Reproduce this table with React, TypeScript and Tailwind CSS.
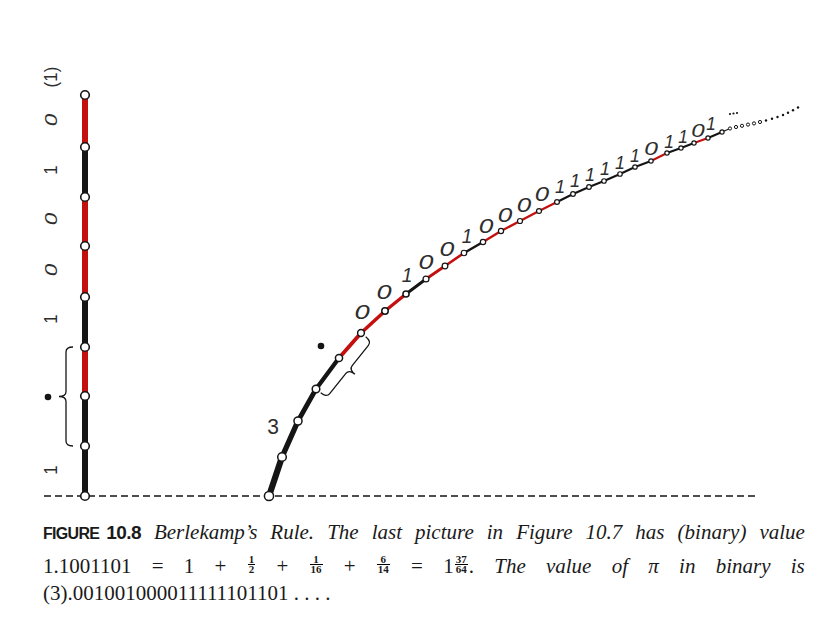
import React from "react";

const RED = "#c40f0f";
const INK = "#151515";

const C: [number, number][] = [
  [269, 496], [282, 457], [298, 421], [316, 389], [339, 358], [361, 333],
  [385, 311], [406, 294], [426, 279], [445, 266], [464, 253], [483, 242],
  [501, 231], [520, 221], [539, 211], [557, 202], [573, 194], [589, 187],
  [604, 181], [620, 174], [635, 167], [651, 161], [667, 153], [681, 148],
  [694, 143], [708, 138], [722, 132],
];

const DIGITS = "001001000011111101101";

const LABELS: [number, number][] = [
  [362, 312], [384, 292], [407, 275], [426, 262], [447, 249], [467, 236],
  [486, 226], [505, 215], [524, 205], [542, 194], [560, 186], [575, 180],
  [590, 174], [605, 168], [620, 162], [635, 156], [651, 149], [669, 142],
  [683, 137], [698, 131], [711, 124],
];

const LEFT_Y = [95, 147, 197, 246, 297, 347, 396, 446, 496];
const LEFT_COL = [RED, INK, RED, RED, INK, RED, INK, INK];

function segColor(i: number) {
  if (i < 4) return INK;
  if (i === 4) return RED;
  return DIGITS[i - 5] === "0" ? RED : INK;
}

function brace(
  ax: number, ay: number, bx: number, by: number,
  nx: number, ny: number, w: number, k: number
) {
  const len = Math.hypot(bx - ax, by - ay);
  const tx = (bx - ax) / len;
  const ty = (by - ay) / len;
  const mx = (ax + bx) / 2;
  const my = (ay + by) / 2;
  const p = (x: number, y: number) => `${x.toFixed(1)} ${y.toFixed(1)}`;
  return [
    `M ${p(ax, ay)}`,
    `Q ${p(ax + nx * w, ay + ny * w)} ${p(ax + nx * w + tx * k, ay + ny * w + ty * k)}`,
    `L ${p(mx + nx * w - tx * k, my + ny * w - ty * k)}`,
    `Q ${p(mx + nx * w, my + ny * w)} ${p(mx + nx * 2 * w, my + ny * 2 * w)}`,
    `Q ${p(mx + nx * w, my + ny * w)} ${p(mx + nx * w + tx * k, my + ny * w + ty * k)}`,
    `L ${p(bx + nx * w - tx * k, by + ny * w - ty * k)}`,
    `Q ${p(bx + nx * w, by + ny * w)} ${p(bx, by)}`,
  ].join(" ");
}

const TRAIL_CIRCLES: [number, number][] = [
  [730, 128.5], [736, 127], [742, 125.8], [748, 124.6], [754, 123.4], [760, 122],
];
const TRAIL_DOTS: [number, number][] = [
  [766, 120.5], [772, 118.8], [777.5, 117], [783, 115], [788, 112.8], [793, 110.3], [798, 107.5],
];

const SANS = "'Liberation Sans', Arial, sans-serif";

function Digit({
  t, x, y, size, rot = 0, italic = true,
}: { t: string; x: number; y: number; size: number; rot?: number; italic?: boolean }) {
  const sx = t === "0" ? 1.4 : 1;
  return (
    <g transform={`translate(${x} ${y}) rotate(${rot}) scale(${sx} 1.05)`}>
      <text
        x="0"
        y="0"
        textAnchor="middle"
        dominantBaseline="central"
        fontFamily={SANS}
        fontStyle={italic ? "italic" : "normal"}
        fontSize={size}
        fill="#2e2e2e"
      >
        {t}
      </text>
    </g>
  );
}

function Figure() {
  return (
    <svg width="826" height="518" viewBox="0 0 826 518" className="block">
      {/* baseline */}
      <line x1="44" y1="496" x2="756" y2="496" stroke={INK} strokeWidth="1.4" strokeDasharray="7 4" />

      {/* left column */}
      {LEFT_COL.map((c, i) => (
        <line key={i} x1="85" y1={LEFT_Y[i]} x2="85" y2={LEFT_Y[i + 1]} stroke={c} strokeWidth="6" />
      ))}
      {LEFT_Y.map((y, i) => (
        <circle key={i} cx="85" cy={y} r="4.3" fill="#fff" stroke={INK} strokeWidth="1.6" />
      ))}
      <path d={brace(73, 347, 73, 446, -1, 0, 7, 5)} fill="none" stroke={INK} strokeWidth="1.3" />
      <circle cx="48" cy="397" r="3.3" fill={INK} />
      <Digit t="(1)" x={51} y={77} size={17} rot={-90} italic={false} />
      <Digit t="0" x={51} y={120} size={16} rot={-90} />
      <Digit t="1" x={51} y={170} size={17} rot={-90} italic={false} />
      <Digit t="0" x={51} y={219} size={16} rot={-90} />
      <Digit t="0" x={51} y={270} size={16} rot={-90} />
      <Digit t="1" x={51} y={319} size={17} rot={-90} italic={false} />
      <Digit t="1" x={51} y={470} size={17} rot={-90} italic={false} />

      {/* curve */}
      <line x1="722" y1="132" x2="730" y2="128.5" stroke={INK} strokeWidth="1.2" />
      {C.slice(0, -1).map((p, i) => {
        const q = C[i + 1];
        const w = 2 + 4.2 * Math.exp(-i / 5);
        return (
          <line key={i} x1={p[0]} y1={p[1]} x2={q[0]} y2={q[1]} stroke={segColor(i)} strokeWidth={w} strokeLinecap="round" />
        );
      })}
      {C.map((p, i) => (
        <circle
          key={i}
          cx={p[0]}
          cy={p[1]}
          r={2 + 2.6 * Math.exp(-i / 8)}
          fill="#fff"
          stroke={INK}
          strokeWidth={i < 8 ? 1.5 : 1.2}
        />
      ))}
      {TRAIL_CIRCLES.map((p, i) => (
        <circle key={i} cx={p[0]} cy={p[1]} r="1.6" fill="#fff" stroke={INK} strokeWidth="1" />
      ))}
      {TRAIL_DOTS.map((p, i) => (
        <circle key={i} cx={p[0]} cy={p[1]} r="1.2" fill={INK} />
      ))}
      {[[730, 114], [733.5, 113.5], [737, 113]].map((p, i) => (
        <circle key={i} cx={p[0]} cy={p[1]} r="1.1" fill={INK} />
      ))}

      <path d={brace(365.7, 336.8, 320.7, 392.8, 0.78, 0.63, 7.5, 5)} fill="none" stroke={INK} strokeWidth="1.3" />
      <circle cx="321" cy="346" r="3.3" fill={INK} />

      <Digit t="3" x={273} y={427} size={21} italic={false} />
      {LABELS.map((p, i) => (
        <Digit key={i} t={DIGITS[i]} x={p[0]} y={p[1]} size={19.5 - i * 0.12} />
      ))}
    </svg>
  );
}

function Frac({ n, d }: { n: string; d: string }) {
  return (
    <span className="inline-block text-center font-bold not-italic text-[11px] leading-[8.5px] mx-[1px]">
      <span className="block border-b border-black px-[1px] pb-[0.5px]">{n}</span>
      <span className="block px-[1px] pt-[0.5px]">{d}</span>
    </span>
  );
}

export default function App() {
  return (
    <div className="w-[826px] h-[627px] bg-white overflow-hidden text-[#1a1a1a]">
      <Figure />
      <div className="ml-[43px] w-[762px] text-[21px] font-['Liberation_Serif',serif]">
        <div className="h-[28px] leading-[28px] whitespace-nowrap flex justify-between items-baseline">
          <span className="font-['Liberation_Sans',sans-serif] font-bold text-[16px] tracking-[-0.7px]">FIGURE</span>
          <span className="font-['Liberation_Sans',sans-serif] font-bold text-[19px] tracking-[-0.6px] -ml-[6px]">10.8</span>
          <span className="italic">Berlekamp’s</span>
          <span className="italic">Rule.</span>
          <span className="italic">The</span>
          <span className="italic">last</span>
          <span className="italic">picture</span>
          <span className="italic">in</span>
          <span className="italic">Figure</span>
          <span className="italic">10.7</span>
          <span className="italic">has</span>
          <span className="italic">(binary)</span>
          <span className="italic">value</span>
        </div>
        <div className="h-[35px] pt-[6px] leading-[29px] flex justify-between items-baseline whitespace-nowrap">
          <span>1.1001101</span>
          <span>=</span>
          <span>1</span>
          <span>+</span>
          <span>
            <Frac n="1" d="2" />
          </span>
          <span>+</span>
          <span>
            <Frac n="1" d="16" />
          </span>
          <span>+</span>
          <span>
            <Frac n="6" d="14" />
          </span>
          <span>=</span>
          <span>
            1<Frac n="37" d="64" />.
          </span>
          <span className="italic">The</span>
          <span className="italic">value</span>
          <span className="italic">of</span>
          <span className="italic">π</span>
          <span className="italic">in</span>
          <span className="italic">binary</span>
          <span className="italic">is</span>
        </div>
        <div className="h-[24px] leading-[24px] whitespace-nowrap">(3).001001000011111101101 . . . .</div>
      </div>
    </div>
  );
}
